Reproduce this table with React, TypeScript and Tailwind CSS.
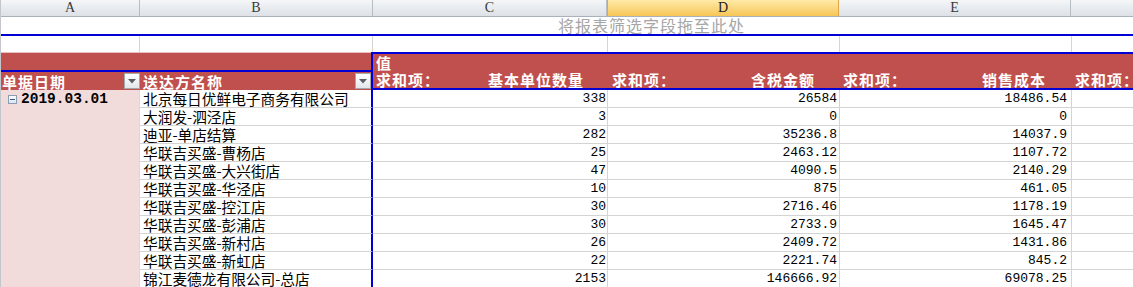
import React from 'react';

const BLUE = 'border-[#0000d4]';
const cjk = "font-['Noto_Sans_CJK_SC',sans-serif]";
const mono = "font-['Liberation_Mono','Noto_Sans_CJK_SC',monospace]";
const serif = "font-['Liberation_Serif',serif]";

const rows = [
  { name: '北京每日优鲜电子商务有限公司', qty: '338', tax: '26584', cost: '18486.54' },
  { name: '大润发-泗泾店', qty: '3', tax: '0', cost: '0' },
  { name: '迪亚-单店结算', qty: '282', tax: '35236.8', cost: '14037.9' },
  { name: '华联吉买盛-曹杨店', qty: '25', tax: '2463.12', cost: '1107.72' },
  { name: '华联吉买盛-大兴街店', qty: '47', tax: '4090.5', cost: '2140.29' },
  { name: '华联吉买盛-华泾店', qty: '10', tax: '875', cost: '461.05' },
  { name: '华联吉买盛-控江店', qty: '30', tax: '2716.46', cost: '1178.19' },
  { name: '华联吉买盛-彭浦店', qty: '30', tax: '2733.9', cost: '1645.47' },
  { name: '华联吉买盛-新村店', qty: '26', tax: '2409.72', cost: '1431.86' },
  { name: '华联吉买盛-新虹店', qty: '22', tax: '2221.74', cost: '845.2' },
  { name: '锦江麦德龙有限公司-总店', qty: '2153', tax: '146666.92', cost: '69078.25' },
];

function DropButton() {
  return (
    <div className="w-[16px] h-[16px] shrink-0 border border-[#a3a8ae] bg-linear-to-b from-[#ffffff] to-[#e3e6ea] flex items-center justify-center">
      <svg width="8" height="5" viewBox="0 0 8 5">
        <path d="M0 0 H8 L4 4.5 Z" fill="#5a5f66" />
      </svg>
    </div>
  );
}

function ColHead({ w, label, active }: { w: string; label: string; active?: boolean }) {
  return (
    <div
      className={`${w} h-full flex items-center justify-center border-r text-[14px] leading-[16px] ${serif} ${
        active
          ? 'bg-linear-to-b from-[#ffeaa6] to-[#f6c654] border-[#e2a647] border-l text-[#222]'
          : 'border-[#b7bdc5] text-[#3a3a3a]'
      }`}
    >
      {label}
    </div>
  );
}

export default function App() {
  return (
    <div className="w-[1133px] h-[287px] overflow-hidden bg-white border-l border-[#c3c7cc]">
      {/* column letters */}
      <div className="flex h-[17px] border-b border-[#a9b1ba] bg-linear-to-b from-[#f4f6f8] to-[#dde1e6]">
        <ColHead w="w-[139px]" label="A" />
        <ColHead w="w-[233px]" label="B" />
        <ColHead w="w-[234px]" label="C" />
        <ColHead w="w-[232px]" label="D" active />
        <ColHead w="w-[232px]" label="E" />
        <div className="flex-1" />
      </div>

      {/* report filter drop zone */}
      <div className={`h-[19px] border-b-2 ${BLUE} flex items-center`}>
        <span className={`ml-[557px] text-[16px] leading-[17px] tracking-[1px] text-[#a6a6a6] ${cjk}`}>
          将报表筛选字段拖至此处
        </span>
      </div>

      {/* empty row */}
      <div className="flex h-[16px]">
        <div className="w-[139px] border-r border-[#d4d4d4]" />
        <div className="w-[233px] border-r border-[#d4d4d4]" />
        <div className="w-[235px] border-r border-[#d4d4d4]" />
        <div className="w-[232px] border-r border-[#d4d4d4]" />
        <div className="w-[232px] border-r border-[#d4d4d4]" />
        <div className="flex-1" />
      </div>

      {/* pivot header */}
      <div className="flex h-[38px] text-white">
        <div className="w-[370px] flex flex-col border-t border-[#e8c1c0]">
          <div className="h-[17px] bg-[#c0504d]" />
          <div className="h-[2px] bg-[#0000d4]" />
          <div className={`h-[18px] bg-[#c0504d] flex ${cjk} font-bold text-[15px] leading-[17px] tracking-[1px]`}>
            <div className="w-[139px] flex items-start justify-between pl-[1px] pt-[1px]">
              <span>单据日期</span>
              <DropButton />
            </div>
            <div className="w-[231px] flex items-start justify-between pl-[3px] pt-[1px]">
              <span>送达方名称</span>
              <DropButton />
            </div>
          </div>
        </div>
        <div
          className={`flex-1 flex flex-col bg-[#c0504d] border-l-2 border-t-2 border-b-2 ${BLUE} ${cjk} font-bold text-[15px] leading-[17px] tracking-[1px]`}
        >
          <div className="h-[17px] pl-[3px]">值</div>
          <div className="h-[17px] flex">
            <div className="w-[235px] flex justify-between pl-[3px] pr-[24px]">
              <span>求和项：</span>
              <span>基本单位数量</span>
            </div>
            <div className="w-[232px] flex justify-between pl-[4px] pr-[25px]">
              <span>求和项：</span>
              <span>含税金额</span>
            </div>
            <div className="w-[232px] flex justify-between pl-[3px] pr-[26px]">
              <span>求和项：</span>
              <span>销售成本</span>
            </div>
            <div className="flex-1 pl-[3px] whitespace-nowrap">求和项：</div>
          </div>
        </div>
      </div>

      {/* data */}
      <div className="flex">
        <div className="w-[139px] shrink-0 bg-[#f2dcdb] border-r border-[#d9d9d9]">
          <div className="h-[18px] flex items-center pl-[7px] gap-[4px]">
            <div className="w-[9px] h-[9px] border border-[#8a9db5] bg-linear-to-b from-[#ffffff] to-[#dbe3ee] flex items-center justify-center">
              <div className="w-[5px] h-[1px] bg-[#3d5a80]" />
            </div>
            <span className={`${mono} font-bold text-[14.5px] leading-[17px] text-black`}>2019.03.01</span>
          </div>
        </div>
        <div className="flex-1 flex flex-col">
          {rows.map((r) => (
            <div key={r.name} className="h-[18px] flex text-black">
              <div
                className={`w-[233px] shrink-0 border-r-2 ${BLUE} border-b border-b-[#d4d4d4] pl-[3px] text-[14.7px] leading-[17px] whitespace-nowrap ${cjk}`}
              >
                {r.name}
              </div>
              <div className={`w-[235px] shrink-0 border-r border-b border-[#d4d4d4] text-right pr-[1px] text-[13px] leading-[18px] ${mono}`}>
                {r.qty}
              </div>
              <div className={`w-[232px] shrink-0 border-r border-b border-[#d4d4d4] text-right pr-[2px] text-[13px] leading-[18px] ${mono}`}>
                {r.tax}
              </div>
              <div className={`w-[232px] shrink-0 border-r border-b border-[#d4d4d4] text-right pr-[4px] text-[13px] leading-[18px] ${mono}`}>
                {r.cost}
              </div>
              <div className="flex-1 border-b border-[#d4d4d4]" />
            </div>
          ))}
        </div>
      </div>
    </div>
  );
}
